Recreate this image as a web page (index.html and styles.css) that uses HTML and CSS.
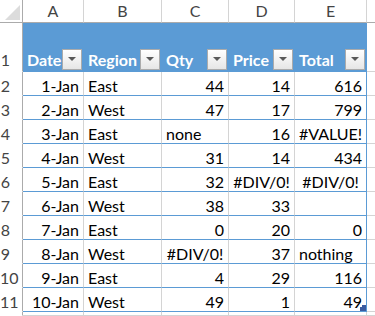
FILE: index.html
```html
<!DOCTYPE html>
<html>
<head>
<meta charset="utf-8">
<link rel="stylesheet" href="styles.css">
</head>
<body>
<div class="sheet">
  <div class="cell corner"><svg class="corner-tri" width="18" height="18" viewBox="0 0 18 18"><polygon points="17,2 17,17 2,17" fill="#DCDCDC"/></svg></div>
  <div class="cell colhdr">A</div>
  <div class="cell colhdr">B</div>
  <div class="cell colhdr">C</div>
  <div class="cell colhdr">D</div>
  <div class="cell colhdr">E</div>
  <div class="cell colhdr colf"></div>

  <div class="cell rowhdr rowhdr1">1</div>
  <div class="cell th"><span class="th-text">Date</span><span class="fbtn"><svg width="8" height="5" viewBox="0 0 8 5"><polygon points="0,0 8,0 4,4" fill="#595959"/></svg></span></div>
  <div class="cell th"><span class="th-text">Region</span><span class="fbtn"><svg width="8" height="5" viewBox="0 0 8 5"><polygon points="0,0 8,0 4,4" fill="#595959"/></svg></span></div>
  <div class="cell th"><span class="th-text">Qty</span><span class="fbtn"><svg width="8" height="5" viewBox="0 0 8 5"><polygon points="0,0 8,0 4,4" fill="#595959"/></svg></span></div>
  <div class="cell th"><span class="th-text">Price</span><span class="fbtn"><svg width="8" height="5" viewBox="0 0 8 5"><polygon points="0,0 8,0 4,4" fill="#595959"/></svg></span></div>
  <div class="cell th"><span class="th-text">Total</span><span class="fbtn"><svg width="8" height="5" viewBox="0 0 8 5"><polygon points="0,0 8,0 4,4" fill="#595959"/></svg></span></div>
  <div class="cell colf"></div>

  <div class="cell rowhdr">2</div>
  <div class="cell td num">1-Jan</div><div class="cell td">East</div><div class="cell td num">44</div><div class="cell td num">14</div><div class="cell td num last">616</div><div class="cell colf"></div>

  <div class="cell rowhdr">3</div>
  <div class="cell td num">2-Jan</div><div class="cell td">West</div><div class="cell td num">47</div><div class="cell td num">17</div><div class="cell td num last">799</div><div class="cell colf"></div>

  <div class="cell rowhdr">4</div>
  <div class="cell td num">3-Jan</div><div class="cell td">East</div><div class="cell td">none</div><div class="cell td num">16</div><div class="cell td err last">#VALUE!</div><div class="cell colf"></div>

  <div class="cell rowhdr">5</div>
  <div class="cell td num">4-Jan</div><div class="cell td">West</div><div class="cell td num">31</div><div class="cell td num">14</div><div class="cell td num last">434</div><div class="cell colf"></div>

  <div class="cell rowhdr">6</div>
  <div class="cell td num">5-Jan</div><div class="cell td">East</div><div class="cell td num">32</div><div class="cell td err">#DIV/0!</div><div class="cell td err last">#DIV/0!</div><div class="cell colf"></div>

  <div class="cell rowhdr">7</div>
  <div class="cell td num">6-Jan</div><div class="cell td">West</div><div class="cell td num">38</div><div class="cell td num">33</div><div class="cell td num last"></div><div class="cell colf"></div>

  <div class="cell rowhdr">8</div>
  <div class="cell td num">7-Jan</div><div class="cell td">East</div><div class="cell td num">0</div><div class="cell td num">20</div><div class="cell td num last">0</div><div class="cell colf"></div>

  <div class="cell rowhdr">9</div>
  <div class="cell td num">8-Jan</div><div class="cell td">West</div><div class="cell td err">#DIV/0!</div><div class="cell td num">37</div><div class="cell td last">nothing</div><div class="cell colf"></div>

  <div class="cell rowhdr">10</div>
  <div class="cell td num">9-Jan</div><div class="cell td">East</div><div class="cell td num">4</div><div class="cell td num">29</div><div class="cell td num last">116</div><div class="cell colf"></div>

  <div class="cell rowhdr">11</div>
  <div class="cell td num">10-Jan</div><div class="cell td">West</div><div class="cell td num">49</div><div class="cell td num">1</div><div class="cell td num last handle-cell">49<svg class="handle" width="6" height="6" viewBox="0 0 6 6"><polygon points="0,2 2,2 2,0 6,0 6,6 0,6" fill="#3A5BA0"/></svg></div><div class="cell colf"></div>

  <div class="cell rowhdr"></div>
  <div class="cell"></div><div class="cell"></div><div class="cell"></div><div class="cell"></div><div class="cell"></div><div class="cell colf"></div>
</div>
</body>
</html>
```

FILE: styles.css
```css
html, body {
  margin: 0;
  padding: 0;
  background: #ffffff;
}

body {
  width: 375px;
  height: 316px;
  overflow: hidden;
  font-family: Lato, "Open Sans", sans-serif;
  font-size: 16px;
  color: #000000;
}

.sheet {
  display: grid;
  grid-template-columns: 23px 61px 78px 67px 66px 72px 1fr;
  grid-template-rows: 23px 49px repeat(10, 24px) 1fr;
  width: 375px;
  height: 316px;
}

.cell {
  box-sizing: border-box;
  border-right: 1px solid #D4D4D4;
  border-bottom: 1px solid #D4D4D4;
  display: flex;
  align-items: flex-end;
  line-height: 19px;
  padding: 0 4px;
  white-space: nowrap;
  min-width: 0;
}

.corner {
  border-right-color: #ABABAB;
  border-bottom-color: #ABABAB;
  padding: 0;
  justify-content: flex-end;
  align-items: flex-end;
}

.corner-tri {
  display: block;
  margin: 0 1px 1px 0;
}

.colhdr {
  justify-content: center;
  align-items: center;
  color: #444444;
  border-bottom-color: #ABABAB;
  line-height: 22px;
  padding: 0;
}

.colf {
  border-right: none;
}

.rowhdr {
  justify-content: safe center;
  padding: 0 11px 0 0;
  color: #444444;
  border-right-color: #ABABAB;
  border-bottom-color: transparent;
}

.rowhdr1 {
  padding-bottom: 2px;
}

.th {
  background: #5B9BD5;
  color: #ffffff;
  font-weight: bold;
  border-right-color: #5B9BD5;
  border-bottom-color: #5B9BD5;
  justify-content: space-between;
  padding: 0 1px 1px 4px;
}

.th-text {
  padding-bottom: 1px;
}

.fbtn {
  box-sizing: border-box;
  width: 20px;
  height: 21px;
  border: 1px solid #ABABAB;
  background: linear-gradient(#ffffff, #E6E6E6);
  display: flex;
  align-items: center;
  justify-content: center;
  flex: none;
}

.fbtn svg {
  display: block;
}

.td {
  border-bottom-color: #5B9BD5;
}

.num {
  justify-content: flex-end;
}

.err {
  justify-content: center;
  padding: 0;
}

.last {
  border-right-color: #5B9BD5;
}

.handle-cell {
  position: relative;
}

.handle {
  position: absolute;
  right: 0;
  bottom: 0;
  display: block;
}
```
